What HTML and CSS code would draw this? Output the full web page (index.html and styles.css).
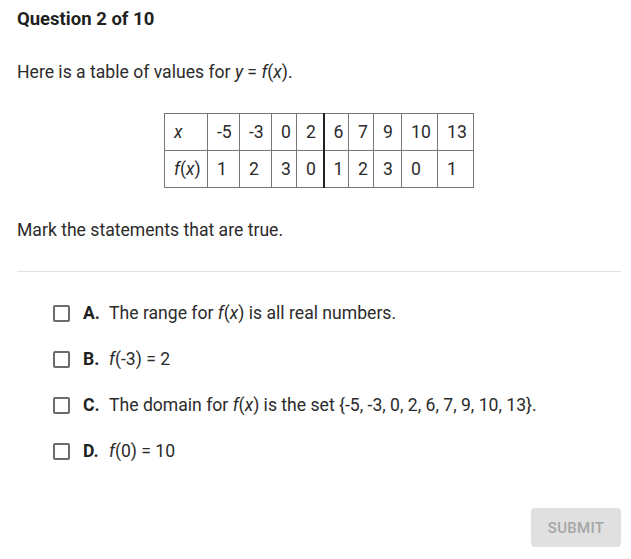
FILE: index.html
```html
<!DOCTYPE html>
<html>
<head>
<meta charset="utf-8">
<link rel="stylesheet" href="styles.css">
</head>
<body>
<div class="page">
  <h1 class="title">Question 2 of 10</h1>
  <p class="prompt">Here is a table of values for <i>y</i> = <i>f</i>(<i>x</i>).</p>
  <table class="values">
    <tr>
      <td class="c0"><i>x</i></td><td class="c1">-5</td><td class="c2">-3</td><td class="c3">0</td><td class="c4 thick">2</td><td class="c5">6</td><td class="c6">7</td><td class="c7">9</td><td class="c8">10</td><td class="c9">13</td>
    </tr>
    <tr>
      <td class="c0"><i>f</i>(<i>x</i>)</td><td>1</td><td>2</td><td>3</td><td class="thick">0</td><td>1</td><td>2</td><td>3</td><td>0</td><td>1</td>
    </tr>
  </table>
  <p class="instr">Mark the statements that are true.</p>
  <hr class="divider">
  <ul class="options">
    <li class="option"><span class="box"></span><b class="letter">A.</b><span class="text">The range for <i>f</i>(<i>x</i>) is all real numbers.</span></li>
    <li class="option"><span class="box"></span><b class="letter">B.</b><span class="text"><i>f</i>(-3) = 2</span></li>
    <li class="option"><span class="box"></span><b class="letter">C.</b><span class="text">The domain for <i>f</i>(<i>x</i>) is the set {-5, -3, 0, 2, 6, 7, 9, 10, 13}.</span></li>
    <li class="option"><span class="box"></span><b class="letter">D.</b><span class="text"><i>f</i>(0) = 10</span></li>
  </ul>
  <div class="actions"><button class="submit">SUBMIT</button></div>
</div>
</body>
</html>
```
FILE: styles.css
```css
html, body {
  margin: 0;
  padding: 0;
  background: #fff;
}
body {
  font-family: Roboto, "Liberation Sans", sans-serif;
  color: #2b2b2b;
}
.page {
  padding: 7px 10px 0 17px;
}
.title {
  margin: 0;
  font-size: 18.5px;
  font-weight: 700;
  line-height: 24px;
  color: #1f1f1f;
}
.prompt {
  margin: 29px 0 0;
  font-size: 17.6px;
  line-height: 24px;
}
.values {
  margin: 29px 0 0 147px;
  border-collapse: collapse;
  table-layout: fixed;
  font-size: 17.6px;
}
.values td {
  border: 1px solid #777;
  height: 37px;
  padding: 0 0 0 9px;
  box-sizing: border-box;
  text-align: left;
  vertical-align: middle;
  white-space: nowrap;
}
.values td.thick {
  border-right: 2px solid #222;
}
.c0 { width: 43px; }
.c1 { width: 32px; }
.c2 { width: 32px; }
.c3 { width: 25px; }
.c4 { width: 27px; }
.c5 { width: 25px; }
.c6 { width: 25px; }
.c7 { width: 28px; }
.c8 { width: 36px; }
.c9 { width: 36px; }
.instr {
  margin: 30px 0 0;
  font-size: 17.6px;
  line-height: 24px;
}
.divider {
  margin: 29px 0 0;
  border: 0;
  border-top: 1px solid #e2e2e2;
}
.options {
  list-style: none;
  margin: 29px 0 0 36px;
  padding: 0;
  display: flex;
  flex-direction: column;
  gap: 22px;
}
.option {
  display: flex;
  align-items: center;
  font-size: 17.6px;
  line-height: 24px;
}
.box {
  width: 17px;
  height: 17px;
  box-sizing: border-box;
  border: 2px solid #6b6b6b;
  border-radius: 2px;
  margin-right: 13px;
}
.letter {
  font-weight: 700;
  width: 26px;
  color: #1f1f1f;
}
.actions {
  display: flex;
  justify-content: flex-end;
  margin-top: 45px;
}
.submit {
  width: 90px;
  height: 39px;
  border: 0;
  border-radius: 4px;
  background: #e0e0e0;
  color: #a6a6a6;
  font-family: Roboto, "Liberation Sans", sans-serif;
  font-size: 15px;
  font-weight: 500;
  letter-spacing: 0.3px;
}
```
